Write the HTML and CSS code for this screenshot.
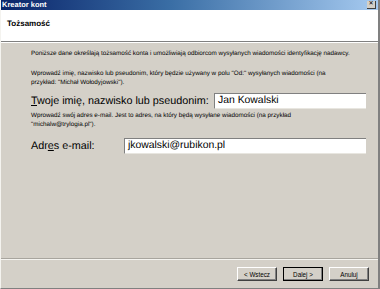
FILE: index.html
```html
<!DOCTYPE html>
<html>
  <head>
    <link rel="stylesheet" href="styles.css">
  </head>
  <body>
    <div class="window">
      <div class="titlebar">
        <span class="title">Kreator kont</span>
        <span class="close">&#x2715;</span>
      </div>
      <div class="header">
        <b>Tożsamość</b>
      </div>
      <div class="content">
        <p class="intro">Poniższe dane określają tożsamość konta i umożliwiają odbiorcom wysyłanych wiadomości identyfikację nadawcy.</p>
        <p class="hint">Wprowadź imię, nazwisko lub pseudonim, który będzie używany w polu "Od:" wysyłanych wiadomości (na<br>przykład: "Michał Wołodyjowski").</p>
        <div class="field">
          <label class="label name-label"><u>T</u>woje imię, nazwisko lub pseudonim:</label>
          <div class="input name">Jan Kowalski</div>
        </div>
        <p class="hint second">Wprowadź swój adres e-mail. Jest to adres, na który będą wysyłane wiadomości (na przykład<br>"michalw@trylogia.pl").</p>
        <div class="field mail-field">
          <label class="label mail-label">Adr<u>e</u>s e-mail:</label>
          <div class="input mail">jkowalski@rubikon.pl</div>
        </div>
      </div>
      <div class="footer">
        <button class="btn">&lt; Wstecz</button>
        <button class="btn default">Dalej &gt;</button>
        <button class="btn">Anuluj</button>
      </div>
    </div>
  </body>
</html>
```

FILE: styles.css
```css
body {
  margin: 0;
  font-family: "Liberation Sans", Arial, sans-serif;
  text-rendering: geometricPrecision;
  background: #d4d0c8;
}
.window {
  width: 380px;
  height: 289px;
  box-sizing: border-box;
  display: flex;
  flex-direction: column;
  background: #d4d0c8;
  border-left: 1px solid #f4f3ef;
  border-right: 2px solid #808080;
  border-bottom: 1px solid #808080;
}
.titlebar {
  height: 10px;
  flex: none;
  display: flex;
  align-items: center;
  justify-content: space-between;
  padding: 0 2px 0 1px;
  background: linear-gradient(to right, #0a246a, #3a6ea5 45%, #a6caf0);
}
.title {
  color: #fff;
  font-weight: bold;
  font-size: 7.5px;
  line-height: 10px;
}
.close {
  width: 8px;
  height: 7px;
  font-size: 6px;
  line-height: 7px;
  text-align: center;
  color: #000;
  background: #d4d0c8;
  border-right: 1px solid #404040;
  border-bottom: 1px solid #404040;
}
.header {
  height: 32px;
  flex: none;
  background: #fff;
  border-bottom: 1px solid #808080;
  box-shadow: 0 1px 0 #fff;
  padding: 9px 0 0 6px;
  box-sizing: border-box;
  font-size: 8px;
}
.content {
  flex: 1;
  padding: 7px 0 0 30px;
  font-size: 6.3px;
  color: #000;
}
.content p {
  margin: 0;
  white-space: nowrap;
  line-height: 9px;
}
.intro {
  margin-bottom: 11px !important;
}
.hint.second {
  margin-top: 2px;
}
.field {
  display: flex;
  align-items: center;
  height: 16px;
  margin-top: 6px;
}
.field.mail-field {
  margin-top: 9px;
}
.label {
  font-size: 10.8px;
  white-space: nowrap;
  flex: none;
}
.name-label {
  width: 183px;
}
.mail-label {
  width: 93px;
}
.input {
  height: 16px;
  box-sizing: border-box;
  background: #fff;
  border-top: 1px solid #808080;
  border-left: 1px solid #808080;
  border-bottom: 1px solid #e8e6e0;
  font-size: 10.4px;
  line-height: 14px;
  padding-left: 3px;
}
.name {
  width: 152px;
}
.mail {
  width: 242px;
}
.footer {
  height: 30px;
  flex: none;
  box-sizing: border-box;
  border-top: 1px solid #a8a59e;
  box-shadow: inset 0 1px 0 #f4f3ef;
  display: flex;
  justify-content: flex-end;
  align-items: flex-start;
  gap: 6px;
  padding: 8px 9px 0 0;
}
.btn {
  width: 40px;
  height: 14px;
  padding: 0;
  font-family: inherit;
  font-size: 6.3px;
  color: #000;
  background: #d4d0c8;
  border: 1px solid;
  border-color: #fff #404040 #404040 #fff;
  box-shadow: inset -1px -1px 0 #808080;
}
.btn.default {
  outline: 1px solid #000;
  outline-offset: -1px;
}
```
